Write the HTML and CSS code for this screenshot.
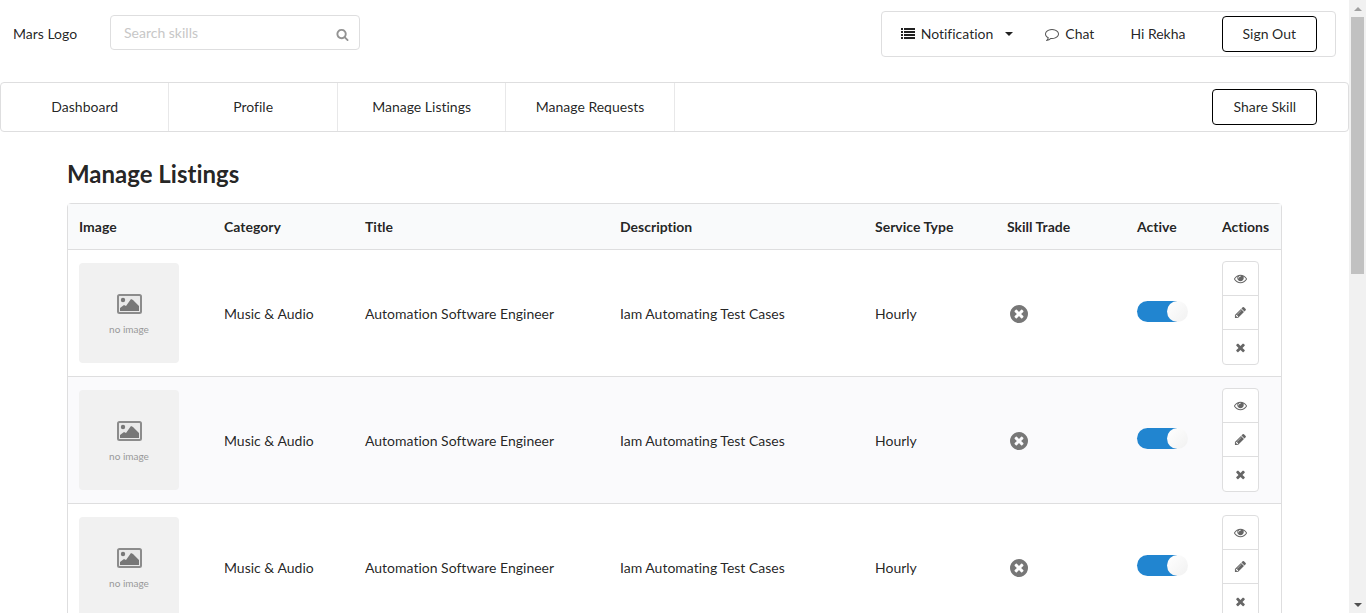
FILE: index.html
```html
<!DOCTYPE html>
<html lang="en">
<head>
<meta charset="utf-8">
<title>Manage Listings</title>
<link rel="stylesheet" href="styles.css">
</head>
<body>
<svg class="sprite" aria-hidden="true">
  <symbol id="search" viewBox="0 0 1792 1792"><path d="M1216 832q0-185-131.500-316.500t-316.500-131.500-316.500 131.500-131.500 316.500 131.500 316.500 316.500 131.500 316.500-131.500 131.500-316.500zm512 832q0 52-38 90t-90 38q-54 0-90-38l-343-342q-179 124-399 124-143 0-273.500-55.500t-225-150-150-225-55.500-273.500 55.500-273.500 150-225 225-150 273.500-55.500 273.500 55.500 225 150 150 225 55.500 273.500q0 220-124 399l343 343q37 37 37 90z"/></symbol>
  <symbol id="list" viewBox="0 0 14 14"><path d="M0 1h2v2H0zM3 1h11v2H3zM0 4h2v2H0zM3 4h11v2H3zM0 7h2v2H0zM3 7h11v2H3zM0 10h2v2H0zM3 10h11v2H3z"/></symbol>
  <symbol id="chat" viewBox="0 0 1792 1792"><path d="M896 384q-204 0-381.500 69.500t-282 187.500-104.500 255q0 112 71.500 213.500t201.500 175.500l87 50-27 96q-24 91-70 172 152-63 275-171l43-38 57 6q69 8 130 8 204 0 381.500-69.500t282-187.500 104.500-255-104.500-255-282-187.500-381.500-69.500zm896 512q0 174-120 321.500t-326 233-450 85.500q-70 0-145-8-198 175-460 242-49 14-114 22h-5q-15 0-27-10.500t-16-27.500v-1q-3-4-.5-12t2-10 4.500-9.500l6-9 7-8.500 8-9q7-8 31-34.500t34.500-38 31-39.500 32.500-51 27-59 26-76q-157-89-247.500-220t-90.500-281q0-174 120-321.500t326-233 450-85.500 450 85.500 326 233 120 321.500z"/></symbol>
  <symbol id="eye" viewBox="0 0 1792 1792"><path d="M1664 960q-152-236-381-353 61 104 61 225 0 185-131.500 316.500t-316.500 131.500-316.500-131.500-131.500-316.500q0-121 61-225-229 117-381 353 133 205 333.500 326.500t434.500 121.500 434.500-121.500 333.500-326.500zm-720-384q0-20-14-34t-34-14q-125 0-214.500 89.500t-89.500 214.500q0 20 14 34t34 14 34-14 14-34q0-86 61-147t147-61q20 0 34-14t14-34zm848 384q0 34-20 69-140 230-376.500 368.500t-499.500 138.500-499.500-139-376.500-368q-20-35-20-69t20-69q140-229 376.500-368t499.500-139 499.500 139 376.500 368q20 35 20 69z"/></symbol>
  <symbol id="pencil" viewBox="0 0 1792 1792"><path d="M491 1536l91-91-235-235-91 91v107h128v128h107zm523-928q0-22-22-22-10 0-17 7l-542 542q-7 7-7 17 0 22 22 22 10 0 17-7l542-542q7-7 7-17zm-54-192l416 416-832 832h-416v-416zm683 96q0 53-37 90l-166 166-416-416 166-165q36-38 90-38 53 0 91 38l235 234q37 39 37 91z"/></symbol>
  <symbol id="times" viewBox="0 0 1792 1792"><path d="M1490 1322q0 40-28 68l-136 136q-28 28-68 28t-68-28l-294-294-294 294q-28 28-68 28t-68-28l-136-136q-28-28-28-68t28-68l294-294-294-294q-28-28-28-68t28-68l136-136q28-28 68-28t68 28l294 294 294-294q28-28 68-28t68 28l136 136q28 28 28 68t-28 68l-294 294 294 294q28 28 28 68z"/></symbol>
  <symbol id="circle-x" viewBox="128 128 1536 1536"><path d="M1277 1122q0-26-19-45l-181-181 181-181q19-19 19-45 0-27-19-46l-90-90q-19-19-46-19-26 0-45 19l-181 181-181-181q-19-19-45-19-27 0-46 19l-90 90q-19 19-19 46 0 26 19 45l181 181-181 181q-19 19-19 45 0 27 19 46l90 90q19 19 46 19 26 0 45-19l181-181 181 181q19 19 45 19 27 0 46-19l90-90q19-19 19-46zm387-226q0 209-103 385.500t-279.500 279.500-385.500 103-385.500-103-279.500-279.500-103-385.500 103-385.500 279.500-279.500 385.500-103 385.500 103 279.500 279.500 103 385.500z"/></symbol>
  <symbol id="picture" viewBox="0 0 26 20"><rect x="2" y="1" width="23" height="18" rx="1.500" fill="#e9e9e9" stroke="#8c8c8c" stroke-width="2"/><circle cx="7" cy="6" r="2.200"/><path d="M4 17v-3l4-3 2 1 5-7 2 1 6 6v5z"/></symbol>
</svg>
<div class="shell">
  <div class="page">
    <header class="topbar">
      <a class="logo" href="#">Mars Logo</a>
      <form class="search">
        <input type="text" placeholder="Search skills" aria-label="Search skills">
        <svg class="icon search-icon"><use href="#search"/></svg>
      </form>
      <div class="account">
        <button class="plain" type="button"><svg class="icon"><use href="#list"/></svg>Notification<span class="caret"></span></button>
        <a class="chat" href="#"><svg class="icon"><use href="#chat"/></svg>Chat</a>
        <span class="greeting">Hi Rekha</span>
        <button class="outline" type="button">Sign Out</button>
      </div>
    </header>
    <nav class="tabs">
      <a href="#">Dashboard</a>
      <a href="#">Profile</a>
      <a href="#">Manage Listings</a>
      <a href="#">Manage Requests</a>
      <button class="outline" type="button">Share Skill</button>
    </nav>
    <main>
      <h2>Manage Listings</h2>
      <table>
        <colgroup><col class="c-image"><col class="c-category"><col><col><col class="c-service"><col class="c-trade"><col class="c-active"><col class="c-actions"></colgroup>
        <thead>
          <tr><th>Image</th><th>Category</th><th>Title</th><th>Description</th><th>Service Type</th><th>Skill Trade</th><th>Active</th><th>Actions</th></tr>
        </thead>
        <tbody>
          <tr>
            <td class="media"><div class="thumb"><svg><use href="#picture"/></svg><span>no image</span></div></td>
            <td>Music &amp; Audio</td><td>Automation Software Engineer</td><td>Iam Automating Test Cases</td><td>Hourly</td>
            <td><svg class="trade"><use href="#circle-x"/></svg></td>
            <td class="media"><input class="toggle" type="checkbox" checked aria-label="Active"></td>
            <td class="media"><div class="actions"><button type="button" aria-label="View"><svg><use href="#eye"/></svg></button><button type="button" aria-label="Edit"><svg><use href="#pencil"/></svg></button><button type="button" aria-label="Delete"><svg><use href="#times"/></svg></button></div></td>
          </tr>
          <tr>
            <td class="media"><div class="thumb"><svg><use href="#picture"/></svg><span>no image</span></div></td>
            <td>Music &amp; Audio</td><td>Automation Software Engineer</td><td>Iam Automating Test Cases</td><td>Hourly</td>
            <td><svg class="trade"><use href="#circle-x"/></svg></td>
            <td class="media"><input class="toggle" type="checkbox" checked aria-label="Active"></td>
            <td class="media"><div class="actions"><button type="button" aria-label="View"><svg><use href="#eye"/></svg></button><button type="button" aria-label="Edit"><svg><use href="#pencil"/></svg></button><button type="button" aria-label="Delete"><svg><use href="#times"/></svg></button></div></td>
          </tr>
          <tr>
            <td class="media"><div class="thumb"><svg><use href="#picture"/></svg><span>no image</span></div></td>
            <td>Music &amp; Audio</td><td>Automation Software Engineer</td><td>Iam Automating Test Cases</td><td>Hourly</td>
            <td><svg class="trade"><use href="#circle-x"/></svg></td>
            <td class="media"><input class="toggle" type="checkbox" checked aria-label="Active"></td>
            <td class="media"><div class="actions"><button type="button" aria-label="View"><svg><use href="#eye"/></svg></button><button type="button" aria-label="Edit"><svg><use href="#pencil"/></svg></button><button type="button" aria-label="Delete"><svg><use href="#times"/></svg></button></div></td>
          </tr>
        </tbody>
      </table>
    </main>
  </div>
  <div class="scrollbar" aria-hidden="true">
    <span class="arrow up"></span>
    <span class="track"><span class="thumb-bar"></span></span>
    <span class="arrow down"></span>
  </div>
</div>
</body>
</html>
```
FILE: styles.css
```css
* { box-sizing: border-box; }

body {
  margin: 0;
  background: #fff;
  color: rgba(0, 0, 0, .87);
  font: 14px/20px Lato, "Liberation Sans", sans-serif;
  font-variant-ligatures: no-common-ligatures;
}

a { color: inherit; text-decoration: none; }
button, input { font: inherit; font-variant-ligatures: inherit; color: inherit; }
button { cursor: pointer; }
svg { display: block; fill: currentColor; }
.sprite { display: none; }
.icon { width: 14px; height: 14px; }

.shell { display: flex; height: 100vh; overflow: hidden; }
.page { flex: 1; min-width: 0; overflow: hidden; }

.topbar {
  display: flex;
  align-items: flex-start;
  padding: 11px 13px 25px;
}
.logo { width: 97px; padding-top: 13px; }

.search {
  display: flex;
  align-items: center;
  width: 250px;
  margin-top: 4px;
  padding-right: 10px;
  border: 1px solid #dededf;
  border-radius: 4px;
}
.search input {
  flex: 1;
  min-width: 0;
  height: 33px;
  padding: 0 13px;
  border: 0;
  background: none;
  outline: 0;
}
.search input::placeholder { color: #c7c7c7; opacity: 1; }
.search-icon { width: 13px; height: 13px; margin-top: 4px; color: #939393; }

.account {
  display: flex;
  align-items: center;
  margin-left: auto;
  height: 46px;
  padding: 0 18px 0 19px;
  border: 1px solid #dededf;
  border-radius: 4px;
}
.plain, .chat { display: flex; align-items: center; gap: 6px; }
.plain { padding: 0; border: 0; background: none; }
.chat { margin-left: 32px; }
.chat .icon { color: #555; }
.greeting { margin: 0 36px; }
.caret {
  margin-left: 6px;
  border: 4px solid transparent;
  border-top-color: currentColor;
  border-bottom: 0;
}
.outline {
  height: 36px;
  padding: 0 20px;
  border: 1px solid #000;
  border-radius: 4px;
  background: #fff;
}

.tabs {
  display: flex;
  align-items: center;
  height: 50px;
  padding-right: 31px;
  border: 1px solid #dededf;
  border-radius: 4px;
}
.tabs a {
  width: 12.8%;
  padding: 14px 0;
  border-right: 1px solid #e8e8e9;
  text-align: center;
}
.tabs .outline { margin-left: auto; }

main { padding: 26px 67px 0; }
h2 { margin: 0 0 13px; font-size: 24px; line-height: 32px; font-weight: 700; }

table {
  width: 100%;
  table-layout: fixed;
  border: 1px solid #dededf;
  border-radius: 4px;
  border-spacing: 0;
}
.c-image { width: 145px; }
.c-category { width: 141px; }
.c-service { width: 132px; }
.c-trade { width: 130px; }
.c-active { width: 85px; }
.c-actions { width: 70px; }
th {
  padding: 13px 0 12px 11px;
  background: #f9fafb;
  text-align: left;
  font-weight: 700;
}
td { padding: 12px 0 10px 11px; border-top: 1px solid #dededf; }
.media { padding: 11px 0 11px 11px; }
tbody tr:nth-child(even) { background: #fafafc; }

.thumb {
  display: flex;
  flex-direction: column;
  align-items: center;
  width: 100px;
  height: 100px;
  padding-top: 31px;
  border-radius: 4px;
  background: #f1f1f1;
  color: #777;
}
.thumb svg { width: 26px; height: 20px; }
.thumb span { margin-top: 9px; font-size: 10px; line-height: 12px; color: #999; }

.trade { width: 18px; height: 18px; margin-left: 3px; color: #777; }

.toggle {
  appearance: none;
  display: grid;
  justify-items: end;
  width: 51px;
  height: 21px;
  margin: 0 0 4px;
  border-radius: 11px;
  background: linear-gradient(to right, #2185d0 40px, transparent 40px);
}
.toggle::before {
  content: "";
  width: 21px;
  height: 21px;
  border-radius: 50%;
  background: linear-gradient(135deg, #fff, #f1f1f1);
}

.actions {
  display: flex;
  flex-direction: column;
  width: 37px;
  border: 1px solid #dededf;
  border-radius: 4px;
  background: #fff;
}
.actions button {
  display: grid;
  place-items: center;
  height: 34px;
  padding: 0;
  border: 0;
  border-bottom: 1px solid #dededf;
  background: none;
  color: #666;
}
.actions button:last-child { border-bottom: 0; }
.actions svg { width: 13px; height: 13px; }

.scrollbar { display: flex; flex-direction: column; width: 17px; background: #f1f1f1; }
.arrow { display: grid; place-items: center; height: 17px; }
.arrow::before { content: ""; border: 4px solid transparent; }
.up::before { border-top: 0; border-bottom-color: #a0a0a0; }
.down::before { border-bottom: 0; border-top-color: #505050; }
.track { flex: 1; padding: 0 2px; }
.thumb-bar { display: block; height: 257px; background: #c1c1c1; }
```
